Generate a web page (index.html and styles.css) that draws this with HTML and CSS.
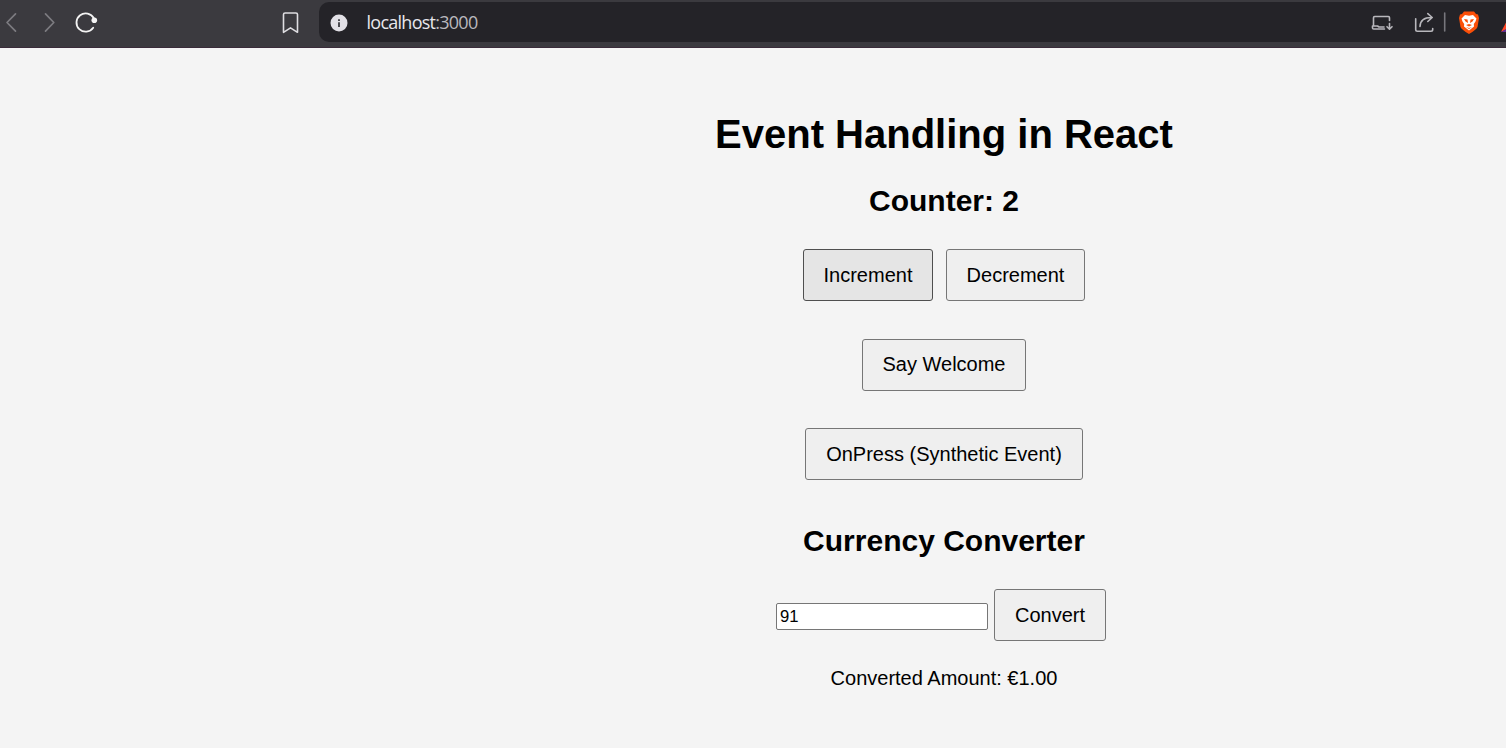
FILE: index.html
```html
<!DOCTYPE html>
<html lang="en">
<head>
<meta charset="utf-8">
<title>Event Handling in React</title>
<link rel="stylesheet" href="styles.css">
</head>
<body>
<header class="toolbar">
  <nav class="nav">
    <svg width="130" height="47" viewBox="0 0 130 47" fill="none" stroke-linecap="round" stroke-linejoin="round">
      <path d="M15.5 13.8 7 22.5 15.5 31.2" stroke="#7c7b80" stroke-width="1.7"/>
      <path d="M45.500 13.800 53.8 22.500 45.500 31.2" stroke="#7c7b80" stroke-width="1.7"/>
      <path d="M93.800 18.200A9.200 9.200 0 1 0 93.200 27.800" stroke="#f4f4f4" stroke-width="1.8"/>
      <circle cx="94.300" cy="20.300" r="2.800" fill="#f4f4f4"/>
    </svg>
  </nav>
  <svg class="bookmark" width="18" height="24" viewBox="0 0 18 24" fill="none" stroke="#dedde1" stroke-width="1.600" stroke-linejoin="round"><path d="M3.100 2H13.900Q15.500 2 15.500 3.600V21.300L8.500 16.800 1.500 21.300V3.600Q1.500 2 3.100 2Z"/></svg>
  <div class="address">
    <svg class="info" width="18" height="18" viewBox="0 0 18 18"><circle cx="9" cy="9" r="8.500" fill="#e2e0e6"/><path d="M8 5.200H10V7H8ZM8 8.200H10V13H8Z" fill="#4a494f"/></svg>
    <span class="url">localhost<span class="port">:3000</span></span>
    <svg class="actions" width="150" height="40" viewBox="1356 2 150 40" fill="none" stroke="#b8b7bc" stroke-width="1.600" stroke-linecap="round" stroke-linejoin="round">
      <path d="M1389.500 20.500V17.700Q1389.500 16.500 1388.300 16.500H1374.700Q1373.500 16.500 1373.500 17.700V26M1372.500 26H1377.500L1379 27H1384M1372.500 26V28Q1372.500 29 1373.700 29H1384.500M1389.500 23.500V28.800M1387 26.700 1389.500 29.200 1392 26.700"/>
      <path d="M1415.700 18.800V29.500Q1415.700 31.200 1417.400 31.200H1431Q1432.700 31.200 1432.700 29.500V28.500M1420 26.500C1420.200 20.800 1424 17.500 1431.500 17.500M1427.800 13.600 1432.200 17.500 1427.800 21.500"/>
      <path d="M1444.700 13V31" stroke="#77767c"/>
      <g stroke="none">
        <path d="M1464 11.500H1474L1476 14 1478 14.500 1479 18 1477.500 27Q1476.500 29.500 1469 34 1461.500 29.500 1460.500 27L1459 18 1460 14.500 1462 14Z" fill="#fb4f08"/>
        <path d="M1465 15 1469 15.700 1473 15 1476.500 18.500 1475.500 21.500 1473.800 24 1474 26.500 1469 30.500 1464 26.500 1464.200 24 1462.500 21.500 1461.500 18.500Z" fill="#fff"/>
        <path d="M1464 19 1467.500 19.500 1468 23 1465.500 21.500ZM1474 19 1470.500 19.500 1470 23 1472.500 21.500ZM1466 25 1469 24 1472 25 1469 26.500ZM1466 27 1469 28 1472 27 1469 29Z" fill="#fb4f08"/>
        <path d="M1501 32 1506 22.500V29.500Z" fill="#ff4724"/>
        <path d="M1501 32 1506 29V32Z" fill="#662d91"/>
      </g>
    </svg>
  </div>
</header>
<main class="app">
  <h1 class="title">Event Handling in React</h1>
  <h2 class="counter">Counter: 2</h2>
  <div class="row counter-buttons">
    <button class="btn increment">Increment</button>
    <button class="btn decrement">Decrement</button>
  </div>
  <button class="btn welcome">Say Welcome</button>
  <button class="btn press">OnPress (Synthetic Event)</button>
  <h2 class="converter-title">Currency Converter</h2>
  <div class="row converter">
    <input class="amount" type="text" value="91">
    <button class="btn convert">Convert</button>
  </div>
  <p class="result">Converted Amount: €1.00</p>
</main>
</body>
</html>
```
FILE: styles.css
```css
* { box-sizing: border-box; }
body {
  margin: 0;
  height: 752px;
  overflow: hidden;
  background: #fff;
  color: #000;
  font-family: "Liberation Sans", Arial, sans-serif;
}
.toolbar {
  display: flex;
  align-items: flex-start;
  height: 48px;
  padding-top: 2px;
  background: #3b3a3f;
  border-bottom: 1px solid #3a2b3a;
}
.nav { width: 282px; height: 40px; }
.nav svg { display: block; margin-top: -2px; }
.bookmark { margin-top: 9px; }
.address {
  display: flex;
  align-items: center;
  flex: 1;
  height: 40px;
  margin-left: 19px;
  padding-left: 11px;
  border-radius: 10px 0 0 10px;
  background: #242328;
}
.info { margin-top: 2px; }
.url {
  margin: -1px 0 0 18.5px;
  font: 18px/24px "Open Sans", "Noto Sans", sans-serif;
  letter-spacing: -0.74px;
  color: #e8e7ec;
}
.port { color: #b9b8be; }
.actions { margin-left: auto; }
.app {
  display: flex;
  flex-direction: column;
  align-items: center;
  height: 700px;
  padding: 63px 0 0 382px;
  background: #f4f4f4;
  font-size: 20px;
}
.title { margin: 0; font-size: 40px; line-height: 46px; }
.counter { margin: 27px 0 0; font-size: 30px; line-height: 34px; }
.row { display: flex; align-items: center; }
.counter-buttons { margin-top: 31px; gap: 13px; }
.btn {
  height: 52px;
  padding: 0;
  border: 1px solid #767676;
  border-radius: 3px;
  background: #efefef;
  color: #000;
  font: 20px/23px "Liberation Sans", Arial, sans-serif;
}
.increment { width: 130px; border-color: #4f4f4f; background: #e5e5e5; }
.decrement { width: 139px; }
.welcome { width: 164px; margin-top: 38px; padding-bottom: 1px; }
.press { width: 278px; margin-top: 37px; }
.converter-title { margin: 44px 0 0; font-size: 30px; line-height: 34px; }
.converter { margin: 31px 6px 0 0; gap: 6px; }
.amount {
  width: 212px;
  height: 27px;
  margin-top: 3px;
  padding: 1px 3px;
  border: 1px solid #767676;
  border-radius: 2px;
  background: #fff;
  font: 16.667px/19px "Liberation Sans", Arial, sans-serif;
}
.convert { width: 112px; }
.result { margin: 26px 0 0; line-height: 23px; }
```
